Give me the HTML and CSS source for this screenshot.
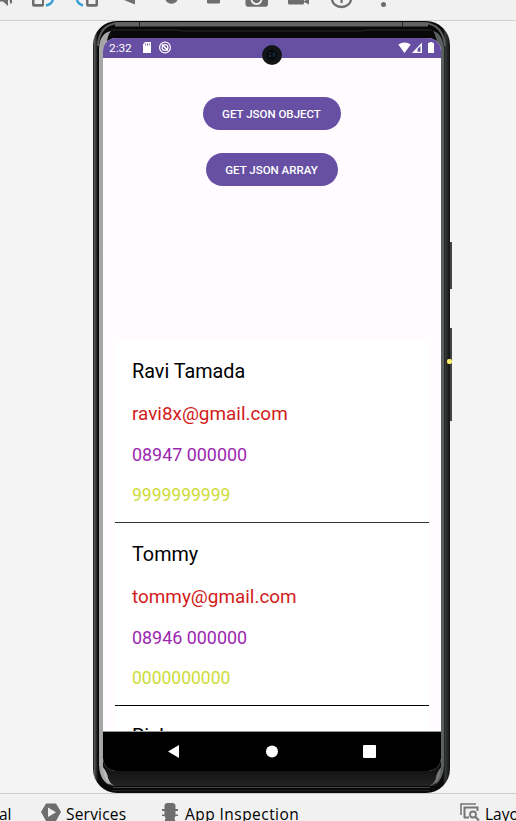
FILE: index.html
```html
<!DOCTYPE html>
<html lang="en">
<head>
<meta charset="utf-8">
<title>Emulator</title>
<link rel="stylesheet" href="styles.css">
</head>
<body>
<header class="toolbar">
<svg width="516" height="20" viewBox="0 0 516 20" fill="#6e6e6e">
<path d="M0 0H8V6L3 1.500H0zM9.500 0H12V3L10.500 4z"/>
<path d="M32 0H44V5Q44 6.700 42 6.700H34Q32 6.700 32 5zM34.500 0V4H42V0z" fill-rule="evenodd"/>
<path d="M46 5.500Q52 4 52.800 0" fill="none" stroke="#389fd6" stroke-width="2.500"/>
<path d="M77 0Q78 4 83 5.500" fill="none" stroke="#389fd6" stroke-width="2.500"/>
<path d="M86 0H98V5Q98 6.700 96 6.700H88Q86 6.700 86 5zM88.500 0V4H95.500V0z" fill-rule="evenodd"/>
<path d="M124 0H135V4.500z"/>
<path d="M165.500 0H177.500Q175.500 3.800 171.500 3.800T165.500 0"/>
<path d="M207 0H220V2.500Q220 3.500 219 3.500H208Q207 3.500 207 2.500z"/>
<path d="M245.500 0H268V4Q268 6.700 265.500 6.700H248Q245.500 6.700 245.500 4z"/>
<path d="M251.500 0Q252.500 4 256.500 4T261.500 0" fill="none" stroke="#f1f1f1" stroke-width="1.800"/>
<path d="M288 0H304V1L309 -1V4.500L304 2V3Q304 4.500 302.500 4.500H289.500Q288 4.500 288 3z"/>
<path d="M332 -1A9.500 8 0 0 0 351 -1" fill="none" stroke="#6e6e6e" stroke-width="2.300"/>
<path d="M340.500 0H342.700V3H340.500z"/>
<circle cx="383.500" cy="4.500" r="2.500"/>
</svg>
</header>
<main class="stage">
<section class="phone">
<svg class="frame" width="360" height="772" viewBox="0 0 360 772">
<defs>
<linearGradient id="side" x1="0" x2="357" y1="0" y2="0" gradientUnits="userSpaceOnUse">
<stop offset="0" stop-color="#111"/><stop offset=".004" stop-color="#555"/><stop offset=".009" stop-color="#303232"/><stop offset=".014" stop-color="#080808"/><stop offset=".98" stop-color="#080808"/><stop offset=".987" stop-color="#363838"/><stop offset="1" stop-color="#111"/>
</linearGradient>
<linearGradient id="chin" x1="0" x2="0" y1="0" y2="1"><stop offset="0" stop-color="#080808"/><stop offset="1" stop-color="#242424"/></linearGradient>
</defs>
<path d="M357 221H359V268H357zM357 307H359V400H357z" fill="#444"/>
<rect width="357" height="772" rx="24" fill="url(#side)"/>
<path d="M5 25Q6 3 26 2H331Q350 3 352 25" fill="none" stroke="#5c5c5c" stroke-width="2"/>
<path d="M22 1.500H335V5.500H22z" fill="#636363"/>
<path d="M46.500 1V6M309.500 1V6" stroke="#222"/>
<rect x="6" y="7" width="344" height="758" rx="19" fill="#090909"/>
<path d="M18 9H86L89 10H269L272 9H339" fill="none" stroke="#292929"/>
<path d="M6 27Q7 12 18 10Q13 16 14 28L10 40V740Q10 756 22 765Q7 764 6 744z" fill="#a6a6a6"/>
<path d="M351 27Q349 12 340 10Q344 16 345 28L348 40V740Q348 756 336 765Q350 764 351 744z" fill="#5b6060"/>
<path d="M10 740H348V748Q344 752 342 765H17Q15 752 10 748z" fill="url(#chin)"/>
<path d="M10 746Q15 753 15 757Q16 762 22 765Q10 762 10 746" fill="#bbb"/>
<path d="M348 746Q343 753 343 757Q342 762 336 765Q348 762 348 746" fill="#777"/>
<path d="M20 766.500H337" stroke="#464646"/>
<path d="M19 769.500H337" stroke="#222"/>
</svg>
<div class="screen">
<div class="status">
<span class="clock">2:32</span>
<svg class="notif" width="30" height="14" viewBox="0 0 30 14"><path d="M3 1H8.500Q9 1 9 1.500V12H1V3.500z" fill="#fff"/><path d="M3.500 2.500V4.500M5.500 2.500V4.500M7.300 2.500V4.500" stroke="#6750a4" stroke-width=".8"/><g fill="none" stroke="#fff"><circle cx="23" cy="6.500" r="5.400" stroke-width="1.200"/><circle cx="23" cy="6.500" r="2.900" stroke-width="1.200"/><path d="M20 3.500L26 9.500" stroke-width="1.500"/></g></svg>
<svg class="signals" width="38" height="14" viewBox="0 0 38 14"><path d="M.3 3.500Q6.500 -.5 12.700 3.500L6.500 12z" fill="#fff"/><path d="M24 1.500V12H14z" fill="#fff"/><path d="M22.500 5V10.700H19.500V8z" fill="#6750a4"/><path d="M31.500 1H34.500V2H36V12H30V2H31.500z" fill="#fff"/></svg>
</div>
<div class="app">
<div class="actions">
<button class="btn object">GET JSON OBJECT</button>
<button class="btn array">GET JSON ARRAY</button>
</div>
<div class="list">
<article class="contact"><div class="name">Ravi Tamada</div><div class="email">ravi8x@gmail.com</div><div class="mobile">08947 000000</div><div class="home">9999999999</div></article>
<article class="contact second"><div class="name">Tommy</div><div class="email tommy">tommy@gmail.com</div><div class="mobile">08946 000000</div><div class="home">0000000000</div></article>
<article class="contact"><div class="name">Rick</div></article>
</div>
</div>
<nav class="nav">
<svg width="338" height="39" viewBox="0 0 338 39" fill="#fff"><path d="M65 19.500L76 13V26z"/><circle cx="169" cy="19.500" r="6"/><rect x="260" y="13" width="13" height="13" rx="1"/></svg>
</nav>
</div>
<svg class="camera" width="20" height="20" viewBox="0 0 20 20"><circle cx="10" cy="10" r="10" fill="#111516"/><circle cx="9.500" cy="10" r="5.500" fill="#080c10"/><ellipse cx="12" cy="9.500" rx="1.500" ry="2.500" fill="#12263d"/><circle cx="8" cy="11" r="1" fill="#173b47"/><circle cx="8" cy="8" r=".7" fill="#3a4446"/></svg>
<span class="pointer"></span>
</section>
</main>
<footer class="tools">
<span class="label terminal">al</span>
<svg class="ic-services" width="20" height="20" viewBox="0 0 20 20"><path d="M5 .5H15L20 9L15 18H5L0 9z" fill="#6e6e6e"/><path d="M7 4.500L15 9.200L7 14z" fill="#f1f1f1"/></svg>
<span class="label services">Services</span>
<svg class="ic-inspect" width="18" height="20" viewBox="0 0 18 20"><path d="M3.500 3Q3.500 0 6.500 0H11.500Q14.500 0 14.500 3V6H17V8H14.500V11.500H17V13H14.500L13 16.500H5L3.500 13H1V11.500H3.500V8H1V6H3.500zM4 16H14V20H4z" fill="#6e6e6e"/></svg>
<span class="label inspection">App Inspection</span>
<svg class="ic-layout" width="20" height="20" viewBox="0 0 20 20" fill="none" stroke="#777"><path d="M1 12V1H16" stroke-width="1.600"/><path d="M4.500 15V4.500H17.500V8M4 14.500H9" stroke-width="2"/><circle cx="13" cy="11.500" r="3" stroke-width="1.800"/><path d="M15 13.500L19 17.500" stroke-width="2.200"/></svg>
<span class="label layout">Layout</span>
</footer>
</body>
</html>
```

FILE: styles.css
```css
* { box-sizing: border-box; }
body {
  margin: 0;
  width: 516px;
  height: 821px;
  display: flex;
  flex-direction: column;
  overflow: hidden;
  background: #f4f4f4;
  font-family: Roboto, sans-serif;
}
svg { display: block; flex: none; }
.toolbar { height: 21px; background: #f1f1f1; border-bottom: 1px solid #d0d0d0; }
.stage { height: 772px; padding-left: 93px; }
.phone { position: relative; width: 357px; height: 772px; padding: 17px 0 0 10px; }
.frame { position: absolute; left: 0; top: 0; }
.screen {
  position: relative;
  width: 338px;
  height: 733px;
  border-radius: 13px;
  overflow: hidden;
  background: #fffbfe;
  display: flex;
  flex-direction: column;
}
.status {
  height: 20px;
  flex: none;
  display: flex;
  align-items: center;
  padding: 0 5px 0 6px;
  background: #6750a4;
  color: #fff;
}
.clock { width: 33px; font-size: 11.800px; line-height: 20px; }
.signals { margin-left: auto; }
.app { height: 674px; display: flex; flex-direction: column; overflow: hidden; border-bottom: 1px solid #999; }
.actions { height: 283px; flex: none; padding-top: 39px; display: flex; flex-direction: column; align-items: center; gap: 23px; }
.btn {
  height: 33px;
  padding: 1px 1px 0 0;
  border: 0;
  border-radius: 17px;
  background: #6750a4;
  color: #fff;
  font: 500 11.500px/32px Roboto, sans-serif;
  white-space: nowrap;
}
.object { width: 138px; }
.array { width: 132px; }
.list { width: 314px; margin-left: 12px; background: #fff; }
.contact { height: 182px; padding: 17px 17px 0; border-bottom: 1px solid #333; white-space: nowrap; }
.second { height: 183px; padding-top: 18px; border-color: #000; }
.contact:last-child { padding-top: 17px; }
.name { height: 42px; font-size: 19.800px; line-height: 27px; color: #000; }
.email { height: 42px; font-size: 18.900px; line-height: 28px; color: #d21b1b; }
.mobile { height: 40px; font-size: 17.900px; line-height: 26px; color: #9c27b0; }
.home { font-size: 17.500px; line-height: 26px; color: #cddc39; }
.nav { height: 39px; flex: none; background: #000; }
.camera { position: absolute; left: 169px; top: 24px; }
.pointer { position: absolute; left: 354px; top: 338px; width: 5px; height: 5px; border-radius: 2px; background: #fbf267; }
.tools {
  height: 28px;
  display: flex;
  align-items: flex-start;
  padding-top: 9px;
  overflow: hidden;
  border-top: 1px solid #cdcdcd;
  background: #f1f1f1;
}
.label { font: 15.500px/22px "Open Sans", sans-serif; color: #000; white-space: nowrap; flex: none; }
.terminal { width: 41px; margin-left: -1px; margin-right: 1px; }
.services { width: 90px; margin-left: 5px; letter-spacing: .2px; }
.ic-inspect { margin-left: 5px; }
.inspection { width: 275px; margin-left: 6px; letter-spacing: .45px; }
.layout { margin-left: 5px; }
```
